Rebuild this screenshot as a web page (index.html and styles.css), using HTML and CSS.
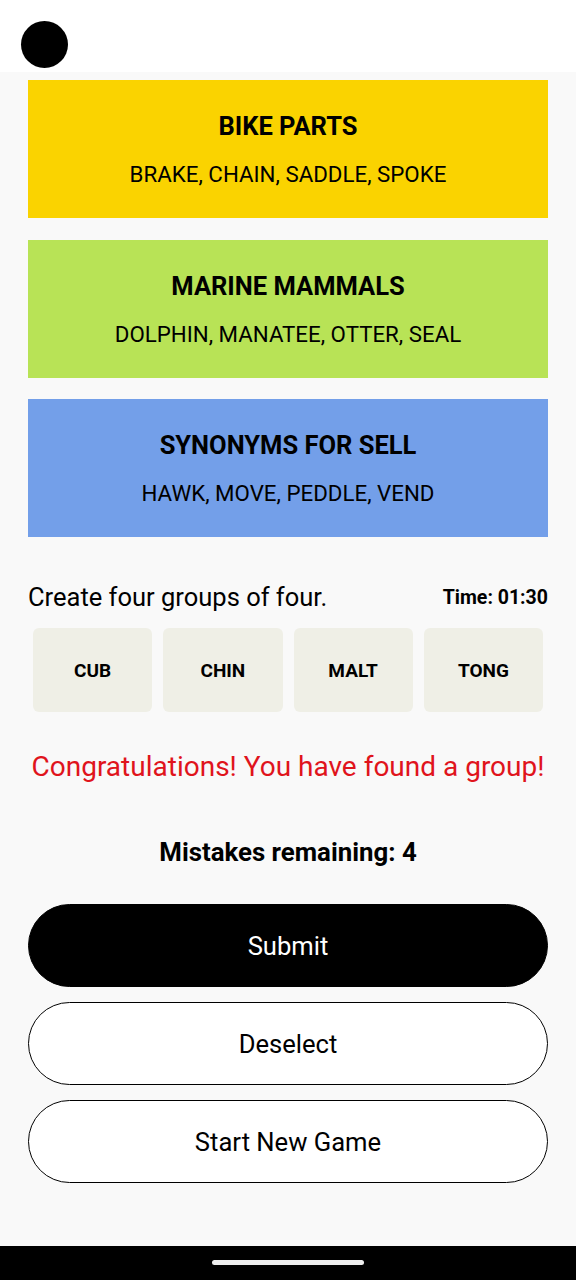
FILE: index.html
```html
<!DOCTYPE html>
<html lang="en">
<head>
    <meta charset="UTF-8">
    <meta name="viewport" content="width=device-width, initial-scale=1.0">
    <title>Connections</title>
    <link rel="stylesheet" href="styles.css">
</head>
<body>
    <div class="status-bar">
        <div class="dot"></div>
    </div>

    <div class="game">
        <div class="group yellow">
            <div class="group-title">BIKE PARTS</div>
            <div class="group-words">BRAKE, CHAIN, SADDLE, SPOKE</div>
        </div>
        <div class="group green">
            <div class="group-title">MARINE MAMMALS</div>
            <div class="group-words">DOLPHIN, MANATEE, OTTER, SEAL</div>
        </div>
        <div class="group blue">
            <div class="group-title">SYNONYMS FOR SELL</div>
            <div class="group-words">HAWK, MOVE, PEDDLE, VEND</div>
        </div>

        <div class="info-row">
            <span class="hint">Create four groups of four.</span>
            <span class="timer">Time: 01:30</span>
        </div>

        <div class="tiles">
            <div class="tile">CUB</div>
            <div class="tile">CHIN</div>
            <div class="tile">MALT</div>
            <div class="tile">TONG</div>
        </div>

        <p class="message">Congratulations! You have found a group!</p>
        <p class="mistakes">Mistakes remaining: 4</p>

        <div class="actions">
            <button class="btn primary">Submit</button>
            <button class="btn">Deselect</button>
            <button class="btn">Start New Game</button>
        </div>
    </div>

    <div class="nav-bar">
        <div class="handle"></div>
    </div>
</body>
</html>
```

FILE: styles.css
```css
html, body {
    margin: 0;
    height: 100%;
}
body {
    font-family: Roboto, "Noto Sans", sans-serif;
    background: #f9f9f9;
    color: #000;
    display: flex;
    flex-direction: column;
}
.status-bar {
    height: 72px;
    background: #fff;
    padding: 21px 0 0 21px;
    box-sizing: border-box;
}
.dot {
    width: 47px;
    height: 47px;
    border-radius: 50%;
    background: #000;
}
.game {
    flex: 1;
    padding: 8px 28px 0;
}
.group {
    height: 138px;
    margin-bottom: 21.5px;
    display: flex;
    flex-direction: column;
    align-items: center;
    justify-content: center;
    gap: 20px;
}
.yellow { background: #fad300; }
.green { background: #b8e356; }
.blue { background: #739fe9; }
.group-title {
    font-size: 25.5px;
    line-height: 30px;
    font-weight: bold;
}
.group-words {
    font-size: 22.3px;
    line-height: 26px;
}
.info-row {
    display: flex;
    justify-content: space-between;
    align-items: center;
    height: 30px;
    margin-top: 45px;
}
.hint {
    font-size: 25.5px;
}
.timer {
    font-size: 19.5px;
    font-weight: bold;
}
.tiles {
    display: grid;
    grid-template-columns: repeat(4, 1fr);
    gap: 11px;
    padding: 0 5px;
    margin-top: 16px;
}
.tile {
    height: 84px;
    background: #efefe6;
    border-radius: 6px;
    display: flex;
    align-items: center;
    justify-content: center;
    font-size: 19px;
    font-weight: bold;
}
.message {
    color: #e0141c;
    font-size: 28px;
    line-height: 34px;
    text-align: center;
    margin: 38px 0 0;
}
.mistakes {
    font-size: 25.8px;
    line-height: 30px;
    font-weight: bold;
    text-align: center;
    margin: 53px 0 0;
}
.actions {
    display: flex;
    flex-direction: column;
    gap: 15px;
    margin-top: 37px;
}
.btn {
    height: 83px;
    border-radius: 42px;
    border: 1.5px solid #000;
    background: #fff;
    font-family: inherit;
    font-size: 25.6px;
    color: #000;
}
.btn.primary {
    background: #000;
    color: #fff;
}
.nav-bar {
    height: 34px;
    background: #000;
    display: flex;
    justify-content: center;
    padding-top: 14px;
    box-sizing: border-box;
}
.handle {
    width: 152px;
    height: 5px;
    border-radius: 3px;
    background: #eee;
}
```
